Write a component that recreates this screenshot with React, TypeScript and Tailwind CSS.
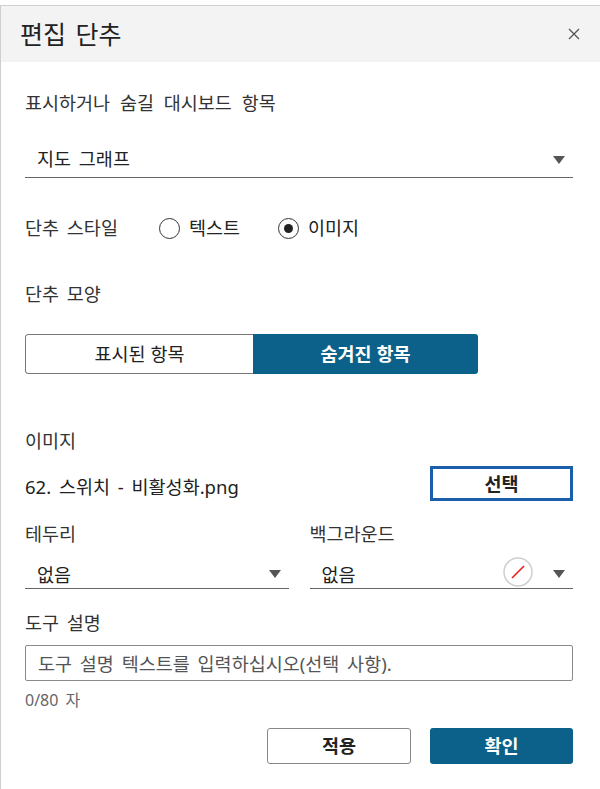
import React, { useState } from 'react';

const font = { fontFamily: '"Noto Sans", "Noto Sans CJK KR", sans-serif' };

const Caret: React.FC = () => (
  <svg width="12" height="8" viewBox="0 0 12 8" className="shrink-0">
    <path d="M0 0 H12 L6 8 Z" fill="#555" />
  </svg>
);

const Radio: React.FC<{ checked: boolean; label: string; onClick: () => void; className?: string }> = ({ checked, label, onClick, className }) => (
  <button type="button" onClick={onClick} className={`flex items-center gap-[9px] ${className ?? ''}`}>
    <span className="w-[21px] h-[21px] rounded-full border border-[#333] flex items-center justify-center shrink-0">
      {checked && <span className="w-[9px] h-[9px] rounded-full bg-[#222]" />}
    </span>
    <span className="text-[18.5px] text-[#222]">{label}</span>
  </button>
);

const App: React.FC = () => {
  const [style, setStyle] = useState<'text' | 'image'>('image');
  const [shape, setShape] = useState<'shown' | 'hidden'>('hidden');
  const [tip, setTip] = useState('');

  return (
    <div className="w-[600px] h-[789px] bg-white pt-[5px] overflow-hidden [word-spacing:3px]" style={font}>
      <div className="h-full border-l border-t border-[#cfcfcf] bg-white">
        {/* header */}
        <div className="h-[56px] bg-[#f3f3f3] flex items-center justify-between pl-[19px] pr-[20px]">
          <h1 className="text-[25px] text-[#222] leading-none">편집 단추</h1>
          <svg width="12" height="12" viewBox="0 0 12 12">
            <path d="M1 1 L11 11 M11 1 L1 11" stroke="#555" strokeWidth="1.3" />
          </svg>
        </div>

        <div className="pl-[24px] pr-[27px]">
          <div className="mt-[30px] text-[18.5px] leading-[22px] text-[#333] [word-spacing:5px]">표시하거나 숨길 대시보드 항목</div>

          <div className="mt-[29px] h-[35px] border-b border-[#666] flex items-start justify-between pt-[5px] pl-[12px] pr-[8px]">
            <span className="text-[18.5px] leading-[22px] text-[#222]">지도 그래프</span>
            <span className="mt-[8px]"><Caret /></span>
          </div>

          <div className="mt-[38px] h-[24px] flex items-center">
            <span className="text-[18.5px] text-[#333] w-[134px]">단추 스타일</span>
            <Radio checked={style === 'text'} label="텍스트" onClick={() => setStyle('text')} className="w-[119px]" />
            <Radio checked={style === 'image'} label="이미지" onClick={() => setStyle('image')} />
          </div>

          <div className="mt-[43px] text-[18.5px] leading-[22px] text-[#333]">단추 모양</div>

          <div className="mt-[29px] w-[453px] h-[40px] flex rounded-[3px] overflow-hidden">
            <button
              type="button"
              onClick={() => setShape('shown')}
              className={`flex-1 text-[18.5px] ${shape === 'shown' ? 'bg-[#0b6189] text-white font-bold' : 'bg-white text-[#222] border border-r-0 border-[#777] rounded-l-[3px]'}`}
            >
              표시된 항목
            </button>
            <button
              type="button"
              onClick={() => setShape('hidden')}
              className={`w-[225px] text-[18.5px] ${shape === 'hidden' ? 'bg-[#0b6189] text-white font-bold' : 'bg-white text-[#222] border border-l-0 border-[#777] rounded-r-[3px]'}`}
            >
              숨겨진 항목
            </button>
          </div>

          <div className="mt-[56px] text-[18.5px] leading-[22px] text-[#333]">이미지</div>

          <div className="mt-[14px] flex items-start justify-between">
            <span className="mt-[10px] text-[18.5px] leading-[22px] text-[#222]">62. 스위치 - 비활성화.png</span>
            <button type="button" className="w-[143px] h-[35px] border-[3px] border-[#1b5eab] text-[18.5px] font-bold text-[#222]">
              선택
            </button>
          </div>

          <div className="mt-[22px] grid grid-cols-2 gap-x-[21px]">
            <div className="text-[18.5px] leading-[22px] text-[#333]">테두리</div>
            <div className="text-[18.5px] leading-[22px] text-[#333]">백그라운드</div>
            <div className="mt-[14px] h-[30px] border-b border-[#666] flex items-start justify-between pt-[5px] pl-[12px] pr-[8px]">
              <span className="text-[18.5px] leading-[22px] text-[#222]">없음</span>
              <span className="mt-[6px]"><Caret /></span>
            </div>
            <div className="mt-[14px] h-[30px] border-b border-[#666] flex items-start justify-between pt-[5px] pl-[12px] pr-[8px]">
              <span className="text-[18.5px] leading-[22px] text-[#222]">없음</span>
              <div className="flex items-start gap-[20px] -mt-[7px]">
                <svg width="30" height="30" viewBox="0 0 30 30">
                  <circle cx="15" cy="15" r="14" fill="white" stroke="#cfcfcf" strokeWidth="1.5" />
                  <path d="M9 21 L21 9" stroke="#ee1c1c" strokeWidth="1.6" />
                </svg>
                <span className="mt-[13px]"><Caret /></span>
              </div>
            </div>
          </div>

          <div className="mt-[23px] text-[18.5px] leading-[22px] text-[#333]">도구 설명</div>

          <input
            value={tip}
            onChange={(e) => setTip(e.target.value)}
            placeholder="도구 설명 텍스트를 입력하십시오(선택 사항)."
            className="mt-[11px] w-full h-[36px] border border-[#8a8a8a] rounded-[2px] px-[12px] text-[18.5px] text-[#222] placeholder:text-[#555] outline-none [word-spacing:3px]"
          />

          <div className="mt-[10px] text-[16px] leading-[18px] text-[#666]">{tip.length}/80 자</div>

          <div className="mt-[19px] flex justify-end gap-[19px]">
            <button type="button" className="w-[144px] h-[36px] border border-[#888] rounded-[3px] bg-white text-[18.5px] font-bold text-[#222]">
              적용
            </button>
            <button type="button" className="w-[143px] h-[36px] rounded-[3px] bg-[#0b6189] text-[18.5px] font-bold text-white">
              확인
            </button>
          </div>
        </div>
      </div>
    </div>
  );
};

export default App;
